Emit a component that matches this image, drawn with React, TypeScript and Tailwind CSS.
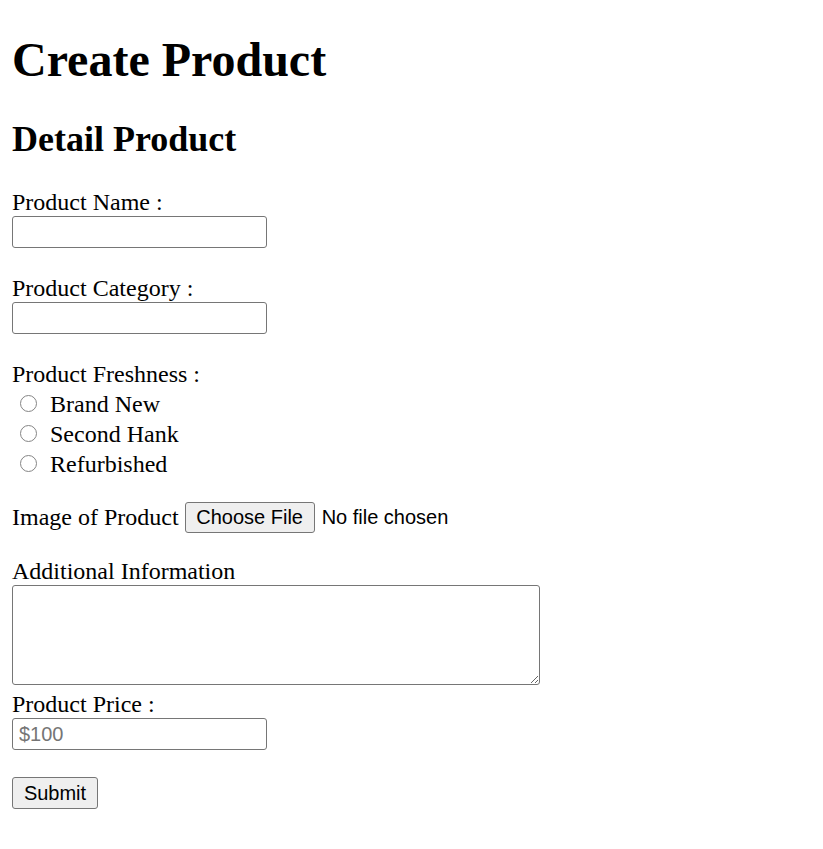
import React, { useState } from 'react';

const fieldBox = "h-8 w-[255px] rounded-[3px] border border-[#767676] bg-white px-[6px] font-['Liberation_Sans',Arial,sans-serif] text-[20px] outline-none placeholder:text-[#757575]";
const btnBox = "rounded-[3px] border border-[#767676] bg-[#efefef] font-['Liberation_Sans',Arial,sans-serif] text-[20px] leading-none text-black";

function App() {
  const [freshness, setFreshness] = useState('');
  const options = ['Brand New', 'Second Hank', 'Refurbished'];

  return (
    <div className="min-h-screen bg-white px-3 pb-10 font-['Liberation_Serif','Times_New_Roman',serif] text-[24px] leading-[27px] text-black">
      <h1 className="pt-8 text-[48px] font-bold leading-[55px]">Create Product</h1>
      <h2 className="mt-8 text-[36px] font-bold leading-[41px]">Detail Product</h2>

      <form className="mt-[30px] flex flex-col items-start" onSubmit={(e) => e.preventDefault()}>
        <label className="h-[26px] leading-[24px]">Product Name :</label>
        <input type="text" className={fieldBox} />
        <div className="h-[28px]" />

        <label className="h-[26px] leading-[24px]">Product Category :</label>
        <input type="text" className={fieldBox} />
        <div className="h-[28px]" />

        <label className="h-[26px] leading-[24px]">Product Freshness :</label>
        {options.map((o) => (
          <label key={o} className="flex h-[30px] items-center">
            <input
              type="radio"
              name="freshness"
              checked={freshness === o}
              onChange={() => setFreshness(o)}
              className="m-0 ml-2 mr-[13px] h-[17px] w-[17px] shrink-0 appearance-none rounded-full border-[1.5px] border-[#858585] bg-white checked:border-[5px] checked:border-[#0075ff]"
            />
            <span className="pt-[2px]">{o}</span>
          </label>
        ))}
        <div className="h-[22px]" />

        <div className="flex h-[34px] items-center">
          <span className="mr-[6px]">Image of Product</span>
          <button type="button" className={`${btnBox} h-[31px] w-[130px]`}>Choose File</button>
          <span className="ml-[7px] font-['Liberation_Sans',Arial,sans-serif] text-[20px]">No file chosen</span>
        </div>
        <div className="h-[24px]" />

        <label className="h-[27px] leading-[27px]">Additional Information</label>
        <textarea className="h-[100px] w-[528px] rounded-[3px] border border-[#767676] bg-white p-1 font-['Liberation_Mono',monospace] text-[20px] outline-none" />

        <label className="h-[33px] pt-[6px] leading-[27px]">Product Price :</label>
        <input type="text" placeholder="$100" className={fieldBox} />
        <div className="h-[27px]" />

        <button type="submit" className={`${btnBox} h-8 w-[86px]`}>Submit</button>
      </form>
    </div>
  );
}

export default App;
